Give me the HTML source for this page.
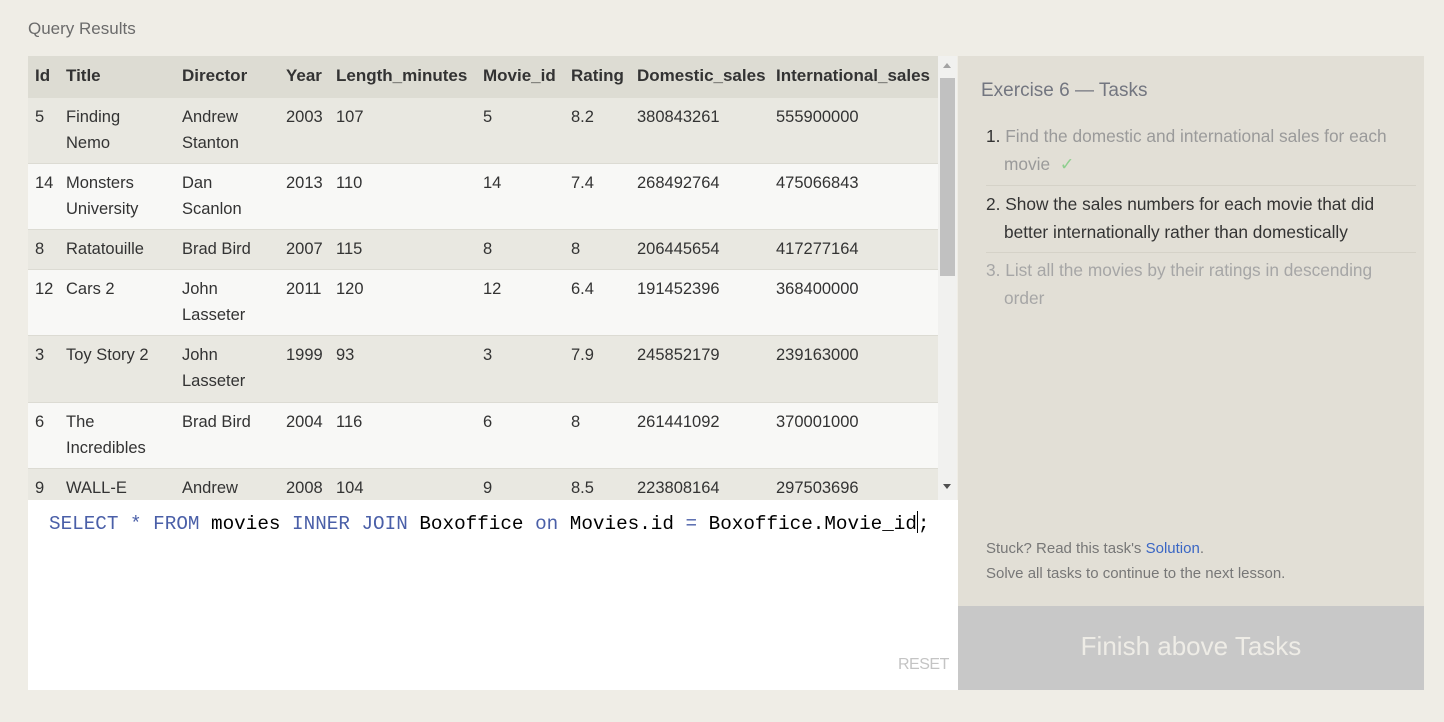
<!DOCTYPE html>
<html><head><meta charset="utf-8"><style>
body{margin:0;width:1444px;height:722px;background:#efede6;font-family:"Liberation Sans",sans-serif;position:relative;overflow:hidden}
.a{position:absolute}
.title{left:28px;top:19px;font-size:17px;color:#6b6b6b}
#tbl{left:28px;top:56px;width:910px;height:444px;overflow:hidden;background:#f8f8f6}
.row{position:absolute;left:0;width:910px;font-size:16.5px;color:#333;line-height:26px;border-bottom:1px solid #dcdbd3;box-sizing:border-box}
.row span{position:absolute;top:6px}
.hd{background:#dddcd3;font-weight:bold;color:#333;border:none;font-size:17px}
.hd span{top:7px}
.o{background:#e9e8e1}.e{background:#f8f8f6}
#sb{left:938px;top:56px;width:19px;height:444px;background:#f1f1ef}
#thumb{left:940px;top:78px;width:15px;height:198px;background:#c1c1c1}
#ed{left:28px;top:500px;width:930px;height:190px;background:#fff}
.code{left:49px;top:511px;font-family:"Liberation Mono",monospace;font-size:19.3px;color:#000;white-space:pre}
.k{color:#4a5fa8}
.cur{display:inline-block;width:0;height:22px;border-left:1px solid #000;vertical-align:-4px}
#side{left:958px;top:56px;width:466px;height:550px;background:#e2dfd6}
#btn{left:958px;top:606px;width:466px;height:84px;background:#c8c8c8;color:#eeece6;font-size:26px;text-align:center;line-height:80px}
</style></head><body>
<div class="a title">Query Results</div>
<div class="a" id="tbl">
<div class="row hd" style="top:0;height:42px"><span style="left:7px">Id</span><span style="left:38px">Title</span><span style="left:154px">Director</span><span style="left:258px">Year</span><span style="left:308px">Length_minutes</span><span style="left:455px">Movie_id</span><span style="left:543px">Rating</span><span style="left:609px">Domestic_sales</span><span style="left:748px">International_sales</span></div>
<div class="row o" style="top:42px;height:66px"><span style="left:7px">5</span><span style="left:38px">Finding<br>Nemo</span><span style="left:154px">Andrew<br>Stanton</span><span style="left:258px">2003</span><span style="left:308px">107</span><span style="left:455px">5</span><span style="left:543px">8.2</span><span style="left:609px">380843261</span><span style="left:748px">555900000</span></div>
<div class="row e" style="top:108px;height:66px"><span style="left:7px">14</span><span style="left:38px">Monsters<br>University</span><span style="left:154px">Dan<br>Scanlon</span><span style="left:258px">2013</span><span style="left:308px">110</span><span style="left:455px">14</span><span style="left:543px">7.4</span><span style="left:609px">268492764</span><span style="left:748px">475066843</span></div>
<div class="row o" style="top:174px;height:40px"><span style="left:7px">8</span><span style="left:38px">Ratatouille</span><span style="left:154px">Brad Bird</span><span style="left:258px">2007</span><span style="left:308px">115</span><span style="left:455px">8</span><span style="left:543px">8</span><span style="left:609px">206445654</span><span style="left:748px">417277164</span></div>
<div class="row e" style="top:214px;height:66px"><span style="left:7px">12</span><span style="left:38px">Cars 2</span><span style="left:154px">John<br>Lasseter</span><span style="left:258px">2011</span><span style="left:308px">120</span><span style="left:455px">12</span><span style="left:543px">6.4</span><span style="left:609px">191452396</span><span style="left:748px">368400000</span></div>
<div class="row o" style="top:280px;height:67px"><span style="left:7px">3</span><span style="left:38px">Toy Story 2</span><span style="left:154px">John<br>Lasseter</span><span style="left:258px">1999</span><span style="left:308px">93</span><span style="left:455px">3</span><span style="left:543px">7.9</span><span style="left:609px">245852179</span><span style="left:748px">239163000</span></div>
<div class="row e" style="top:347px;height:66px"><span style="left:7px">6</span><span style="left:38px">The<br>Incredibles</span><span style="left:154px">Brad Bird</span><span style="left:258px">2004</span><span style="left:308px">116</span><span style="left:455px">6</span><span style="left:543px">8</span><span style="left:609px">261441092</span><span style="left:748px">370001000</span></div>
<div class="row o" style="top:413px;height:66px;border:none"><span style="left:7px">9</span><span style="left:38px">WALL-E</span><span style="left:154px">Andrew</span><span style="left:258px">2008</span><span style="left:308px">104</span><span style="left:455px">9</span><span style="left:543px">8.5</span><span style="left:609px">223808164</span><span style="left:748px">297503696</span></div>
</div>
<div class="a" id="sb"></div><div class="a" id="thumb"></div>
<div class="a" style="left:943px;top:63px;width:0;height:0;border-left:4px solid transparent;border-right:4px solid transparent;border-bottom:5px solid #a3a3a3"></div>
<div class="a" style="left:943px;top:484px;width:0;height:0;border-left:4px solid transparent;border-right:4px solid transparent;border-top:5px solid #505050"></div>
<div class="a" id="ed"></div>
<div class="a code"><span class="k">SELECT</span> <span class="k">*</span> <span class="k">FROM</span> movies <span class="k">INNER</span> <span class="k">JOIN</span> Boxoffice <span class="k">on</span> Movies.id <span class="k">=</span> Boxoffice.Movie_id<span class="cur"></span>;</div>
<div class="a" style="left:898px;top:656px;font-size:16px;color:#c4c4c4;letter-spacing:-0.5px">RESET</div>
<div class="a" id="side"></div>
<div class="a" style="left:981px;top:80px;font-size:19px;color:#737680">Exercise 6 — Tasks</div>
<div class="a" style="left:986px;top:122px;width:430px;font-size:17.3px;line-height:28px">
<div style="color:#9a9a9a;padding-left:18px;text-indent:-18px;padding-bottom:7px;border-bottom:1px solid #d5d2c8"><span style="color:#333">1.</span> Find the domestic and international sales for each movie &nbsp;<span style="color:#8fcf8f">✓</span></div>
<div style="color:#333;padding:4px 0 6px 18px;text-indent:-18px;border-bottom:1px solid #d5d2c8">2. Show the sales numbers for each movie that did better internationally rather than domestically</div>
<div style="color:#a6a6a6;padding:3px 0 0 18px;text-indent:-18px">3. List all the movies by their ratings in descending order</div>
</div>
<div class="a" style="left:986px;top:536px;font-size:15px;color:#777;line-height:25px">Stuck? Read this task's <span style="color:#3a66c4">Solution</span>.<br>Solve all tasks to continue to the next lesson.</div>
<div class="a" id="btn">Finish above Tasks</div>
</body></html>
